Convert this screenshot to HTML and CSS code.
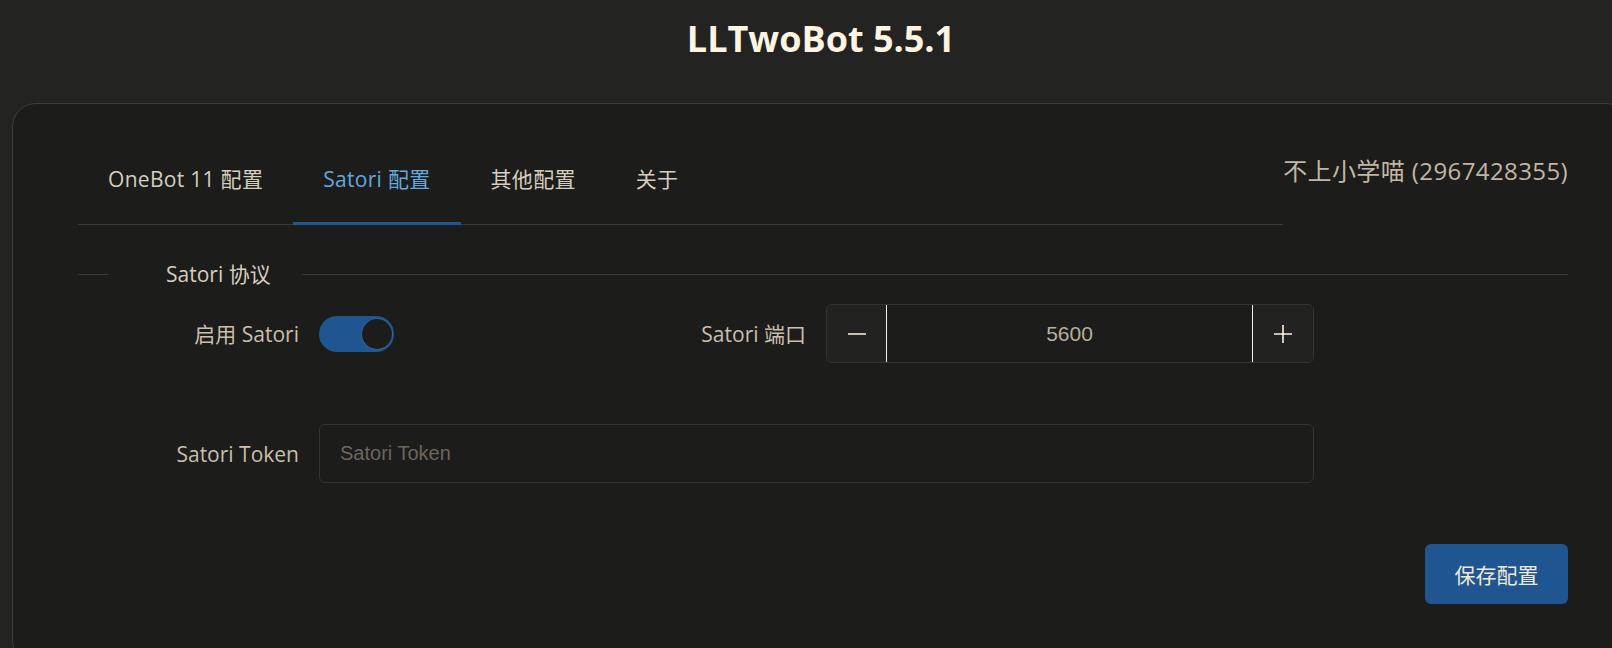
FILE: index.html
```html
<!DOCTYPE html>
<html lang="zh-CN">
<head>
  <meta charset="UTF-8">
  <meta name="viewport" content="width=device-width, initial-scale=1.0">
  <title>LLTwoBot 设置</title>
  <link rel="stylesheet" href="styles.css">
</head>
<body>
  <div class="page">
    <header class="top">
      <h1>LLTwoBot 5.5.1</h1>
    </header>

    <main class="card">
      <div class="card-head">
        <nav class="tabs">
          <a class="tab">OneBot 11 配置</a>
          <a class="tab active">Satori 配置</a>
          <a class="tab">其他配置</a>
          <a class="tab">关于</a>
        </nav>
        <div class="account">不上小学喵 (2967428355)</div>
      </div>

      <section class="group">
        <div class="group-title">
          <span class="rule short"></span>
          <span class="legend">Satori 协议</span>
          <span class="rule"></span>
        </div>

        <div class="form">
          <label class="field-label">启用 Satori</label>
          <div class="cell">
            <span class="switch on"><span class="knob"></span></span>
          </div>

          <label class="field-label" for="port">Satori 端口</label>
          <div class="number">
            <button class="step" type="button" aria-label="减少">
              <svg width="18" height="18" viewBox="0 0 18 18"><path d="M0 9h18" stroke="#fdf3df" stroke-width="1.6"/></svg>
            </button>
            <input id="port" type="text" value="5600">
            <button class="step plus" type="button" aria-label="增加">
              <svg width="18" height="18" viewBox="0 0 18 18"><path d="M0 9h18M9 0v18" stroke="#fdf3df" stroke-width="1.6"/></svg>
            </button>
          </div>

          <label class="field-label" for="token">Satori Token</label>
          <input class="text-input wide" id="token" type="text" placeholder="Satori Token">
        </div>

        <div class="actions">
          <button class="save" type="button">保存配置</button>
        </div>
      </section>
    </main>
  </div>
</body>
</html>
```

FILE: styles.css
```css
:root {
  --page-bg: #232321;
  --card-bg: #1c1c1b;
  --line: #3b3b3b;
  --text: #d6cebe;
  --label: #c9bfad;
  --accent: #1f5590;
  --accent-text: #62a8df;
  --radius: 6px;
}
html { overflow: hidden; }
* { box-sizing: border-box; }
body {
  margin: 0;
  background: var(--page-bg);
  color: var(--text);
  font-family: "Open Sans", "Noto Sans CJK SC", sans-serif;
  font-size: 21px;
}
.page {
  width: 1642px;
}
.top {
  padding: 17px 0 42px;
  text-align: center;
}
.top h1 {
  margin: 0;
  font-size: 36px;
  line-height: 44px;
  font-weight: 700;
  color: #fdf4e2;
}
.card {
  height: 561px;
  margin: 0 12px;
  padding: 40px 61px 0 65px;
  background: var(--card-bg);
  border: 1px solid #3d3d3d;
  border-radius: 24px;
}
.card-head {
  display: flex;
  align-items: flex-start;
}
.tabs {
  flex: 1;
  display: flex;
  box-shadow: inset 0 -1px 0 var(--line);
}
.tab {
  padding: 20px 30px 28px;
  line-height: 30px;
  letter-spacing: 0.3px;
  border-bottom: 3px solid transparent;
  color: var(--text);
  cursor: pointer;
}
.tab.active {
  color: var(--accent-text);
  border-bottom-color: var(--accent);
}
.account {
  margin-top: 11px;
  font-size: 24px;
  line-height: 32px;
  letter-spacing: 0.4px;
  color: #c0b6a4;
}
.group-title {
  display: flex;
  align-items: center;
  height: 30px;
  margin-top: 34px;
}
.rule {
  flex: 1;
  height: 1px;
  background: var(--line);
}
.rule.short {
  flex: 0 0 30px;
}
.legend {
  padding: 0 31px 0 58px;
  line-height: 30px;
  color: var(--text);
}
.form {
  display: grid;
  grid-template-columns: 241px 377px 130px 488px;
  grid-auto-rows: 59px;
  row-gap: 61px;
  align-items: center;
  margin-top: 15px;
}
.field-label {
  padding-right: 20px;
  text-align: right;
  color: var(--label);
  line-height: 30px;
}
.switch {
  display: flex;
  align-items: center;
  justify-content: flex-end;
  width: 75px;
  height: 36px;
  padding: 0 2px;
  border-radius: 18px;
  background: var(--accent);
}
.knob {
  width: 30px;
  height: 30px;
  border-radius: 50%;
  background: var(--card-bg);
  box-shadow: 0 0 0 1px #2a62a0;
}
.number {
  display: flex;
  height: 59px;
  border: 1px solid #343434;
  border-radius: var(--radius);
  overflow: hidden;
}
.step {
  display: flex;
  align-items: center;
  justify-content: center;
  width: 60px;
  padding: 0;
  border: none;
  border-right: 1px solid #f2f2f2;
  background: #222221;
  cursor: pointer;
}
.step.plus {
  width: 61px;
  border-right: none;
  border-left: 1px solid #f2f2f2;
}
.number input {
  flex: 1;
  min-width: 0;
  border: none;
  outline: none;
  background: transparent;
  text-align: center;
  font-family: "Liberation Sans", Arial, sans-serif;
  font-size: 21px;
  color: #b8ae9c;
}
.text-input {
  height: 59px;
  padding: 0 20px;
  border: 1px solid #343434;
  border-radius: var(--radius);
  background: var(--card-bg);
  outline: none;
  font-family: "Liberation Sans", Arial, sans-serif;
  font-size: 20px;
  color: #b8ae9c;
}
.text-input::placeholder {
  color: #6c665c;
}
.wide {
  grid-column: 2 / span 3;
}
.actions {
  display: flex;
  justify-content: flex-end;
  margin-top: 61px;
}
.save {
  width: 143px;
  height: 60px;
  border: none;
  border-radius: var(--radius);
  background: var(--accent);
  color: #efe8d8;
  font-family: inherit;
  font-size: 21px;
  cursor: pointer;
}
```
